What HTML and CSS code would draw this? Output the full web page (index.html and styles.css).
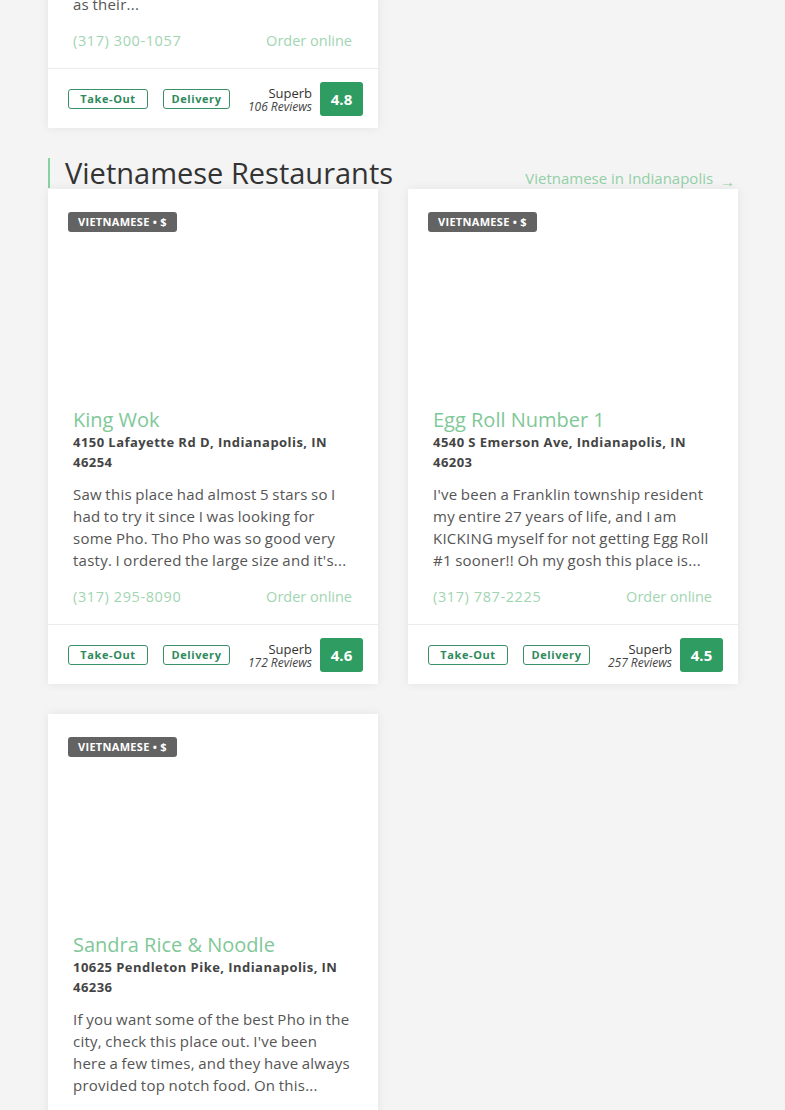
FILE: index.html
```html
<!DOCTYPE html>
<html lang="en">
<head>
    <meta charset="UTF-8">
    <title>Vietnamese Restaurants</title>
    <link rel="stylesheet" href="styles.css">
</head>
<body>
<div class="page">
    <div class="card card-top">
        <div class="body">
            <p class="desc">as their...</p>
            <div class="contact">
                <a href="javascript:;" class="phone">(317) 300-1057</a>
                <a href="javascript:;">Order online</a>
            </div>
        </div>
        <div class="foot">
            <span class="tag tag-take">Take-Out</span>
            <span class="tag tag-del">Delivery</span>
            <div class="rating">
                <span class="word">Superb</span>
                <span class="count">106 Reviews</span>
            </div>
            <span class="score">4.8</span>
        </div>
    </div>

    <div class="section-head">
        <h2>Vietnamese Restaurants</h2>
        <a href="javascript:;" class="more">Vietnamese in Indianapolis <span class="arrow">&rarr;</span></a>
    </div>

    <div class="grid">
        <div class="card">
            <div class="media"><span class="badge">Vietnamese &bull; $</span></div>
            <div class="body">
                <h3>King Wok</h3>
                <p class="addr">4150 Lafayette Rd D, Indianapolis, IN 46254</p>
                <p class="desc">Saw this place had almost 5 stars so I had to try it since I was looking for some Pho. Tho Pho was so good very tasty. I ordered the large size and it's...</p>
                <div class="contact">
                    <a href="javascript:;" class="phone">(317) 295-8090</a>
                    <a href="javascript:;">Order online</a>
                </div>
            </div>
            <div class="foot">
                <span class="tag tag-take">Take-Out</span>
                <span class="tag tag-del">Delivery</span>
                <div class="rating">
                    <span class="word">Superb</span>
                    <span class="count">172 Reviews</span>
                </div>
                <span class="score">4.6</span>
            </div>
        </div>

        <div class="card">
            <div class="media"><span class="badge">Vietnamese &bull; $</span></div>
            <div class="body">
                <h3>Egg Roll Number 1</h3>
                <p class="addr">4540 S Emerson Ave, Indianapolis, IN 46203</p>
                <p class="desc">I've been a Franklin township resident my entire 27 years of life, and I am KICKING myself for not getting Egg Roll #1 sooner!! Oh my gosh this place is...</p>
                <div class="contact">
                    <a href="javascript:;" class="phone">(317) 787-2225</a>
                    <a href="javascript:;">Order online</a>
                </div>
            </div>
            <div class="foot">
                <span class="tag tag-take">Take-Out</span>
                <span class="tag tag-del">Delivery</span>
                <div class="rating">
                    <span class="word">Superb</span>
                    <span class="count">257 Reviews</span>
                </div>
                <span class="score">4.5</span>
            </div>
        </div>

        <div class="card">
            <div class="media"><span class="badge">Vietnamese &bull; $</span></div>
            <div class="body">
                <h3>Sandra Rice &amp; Noodle</h3>
                <p class="addr">10625 Pendleton Pike, Indianapolis, IN 46236</p>
                <p class="desc">If you want some of the best Pho in the city, check this place out. I've been here a few times, and they have always provided top notch food. On this...</p>
                <div class="contact">
                    <a href="javascript:;" class="phone">(317) 898-6888</a>
                    <a href="javascript:;">Order online</a>
                </div>
            </div>
            <div class="foot">
                <span class="tag tag-take">Take-Out</span>
                <span class="tag tag-del">Delivery</span>
                <div class="rating">
                    <span class="word">Superb</span>
                    <span class="count">98 Reviews</span>
                </div>
                <span class="score">4.6</span>
            </div>
        </div>
    </div>
</div>
</body>
</html>
```

FILE: styles.css
```css
* {
    margin: 0;
    padding: 0;
    box-sizing: border-box;
}

body {
    background: #f4f4f4;
    font-family: "Open Sans", "Noto Sans", sans-serif;
    color: #333;
}

a {
    text-decoration: none;
}

.page {
    width: 690px;
    margin: -7px 48px 0;
}

.card {
    width: 330px;
    background: #fff;
    box-shadow: 0 0 10px rgba(0, 0, 0, 0.07);
}

.media {
    display: flex;
    align-items: flex-start;
    height: 219px;
    padding: 23px 20px 0;
}

.badge {
    height: 20px;
    line-height: 20px;
    padding: 0 10px;
    border-radius: 3px;
    background: #636363;
    color: #fff;
    font-size: 11px;
    font-weight: 700;
    letter-spacing: 0.3px;
    text-transform: uppercase;
}

.body {
    padding: 0 26px 16px 25px;
}

.body h3 {
    font-size: 20px;
    line-height: 24px;
    font-weight: 500;
    color: #7fc898;
}

.addr {
    font-size: 13px;
    line-height: 20px;
    font-weight: 700;
    letter-spacing: 0.45px;
    color: #444;
}

.desc {
    margin-top: 11px;
    font-size: 15px;
    line-height: 22px;
    letter-spacing: 0.25px;
    word-spacing: -0.75px;
    color: #555;
}

.card-top .desc {
    margin-top: 0;
}

.contact {
    display: flex;
    justify-content: space-between;
    margin-top: 15px;
    font-size: 14.5px;
    line-height: 22px;
}

.contact a {
    color: #a1d5b2;
}

.contact .phone {
    letter-spacing: 0.6px;
}

.foot {
    display: flex;
    align-items: center;
    height: 60px;
    padding: 0 15px 0 20px;
    border-top: 1px solid #ececec;
}

.tag {
    display: inline-block;
    height: 20px;
    line-height: 18px;
    border: 1px solid #3a8f66;
    border-radius: 3px;
    color: #2f8a5c;
    font-size: 11px;
    font-weight: 700;
    letter-spacing: 0.6px;
    text-align: center;
}

.tag-take {
    width: 80px;
}

.tag-del {
    width: 67px;
    margin-left: 15px;
}

.rating {
    flex: 1;
    display: flex;
    flex-direction: column;
    align-items: flex-end;
    margin-right: 8px;
    padding-top: 3px;
}

.word {
    font-size: 13px;
    line-height: 13px;
    color: #333;
}

.count {
    font-size: 12px;
    line-height: 13px;
    font-style: italic;
    color: #444;
}

.score {
    width: 43px;
    height: 34px;
    line-height: 34px;
    border-radius: 3px;
    background: #2f9d62;
    color: #fff;
    font-size: 15px;
    font-weight: 700;
    text-align: center;
}

.section-head {
    display: flex;
    justify-content: space-between;
    align-items: flex-end;
    margin-top: 30px;
}

.section-head h2 {
    border-left: 2px solid #86d2a0;
    padding-left: 15px;
    font-size: 29px;
    line-height: 30px;
    font-weight: 400;
    color: #333;
}

.more {
    font-size: 15px;
    line-height: 22px;
    color: #93cfa7;
    margin-right: 3px;
    margin-bottom: -1px;
}

.arrow {
    display: inline-block;
    margin-left: 3px;
    transform: translateY(3px);
}

.grid {
    display: grid;
    grid-template-columns: 330px 330px;
    gap: 30px;
    margin-top: 1px;
}
```
